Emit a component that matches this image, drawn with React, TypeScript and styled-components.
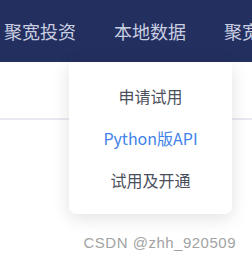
import styled, { createGlobalStyle } from "styled-components";

const GlobalStyle = createGlobalStyle`
  html, body {
    margin: 0;
    padding: 0;
    background: #ffffff;
  }
  body {
    font-family: "Noto Sans CJK SC", "Noto Sans", sans-serif;
  }
`;

const Page = styled.div`
  position: relative;
  width: 252px;
  height: 261px;
  overflow: hidden;
  background: #ffffff;
`;

const NavBar = styled.nav`
  display: flex;
  align-items: center;
  gap: 38px;
  height: 62px;
  padding-left: 4px;
  background: #232f5e;
  white-space: nowrap;
`;

const NavItem = styled.span`
  font-size: 18px;
  line-height: 1;
  color: #c9cee2;
  flex-shrink: 0;
`;

const SubHeader = styled.div`
  height: 56px;
  border-bottom: 2px solid #e9eaf1;
`;

const Dropdown = styled.ul`
  position: absolute;
  left: 69px;
  top: 62px;
  width: 163px;
  height: 152px;
  margin: 0;
  padding: 13px 0;
  box-sizing: border-box;
  list-style: none;
  background: #ffffff;
  border-radius: 3px 3px 7px 7px;
  box-shadow: 0 4px 18px rgba(0, 0, 0, 0.12);
  display: flex;
  flex-direction: column;
`;

const MenuItem = styled.li<{ $active?: boolean }>`
  height: 42px;
  display: flex;
  align-items: center;
  justify-content: center;
  font-size: 16px;
  color: ${(p) => (p.$active ? "#3f82ea" : "#4b505c")};
`;

const Watermark = styled.div`
  position: absolute;
  right: 16px;
  top: 234px;
  font-family: "Liberation Sans", Arial, sans-serif;
  font-size: 15px;
  letter-spacing: 0.5px;
  line-height: 18px;
  color: #a3a3a3;
`;

export default function App() {
  return (
    <Page>
      <GlobalStyle />
      <NavBar>
        <NavItem>聚宽投资</NavItem>
        <NavItem>本地数据</NavItem>
        <NavItem>聚宽投资</NavItem>
      </NavBar>
      <SubHeader />
      <Dropdown>
        <MenuItem>申请试用</MenuItem>
        <MenuItem $active>Python版API</MenuItem>
        <MenuItem>试用及开通</MenuItem>
      </Dropdown>
      <Watermark>CSDN @zhh_920509</Watermark>
    </Page>
  );
}
